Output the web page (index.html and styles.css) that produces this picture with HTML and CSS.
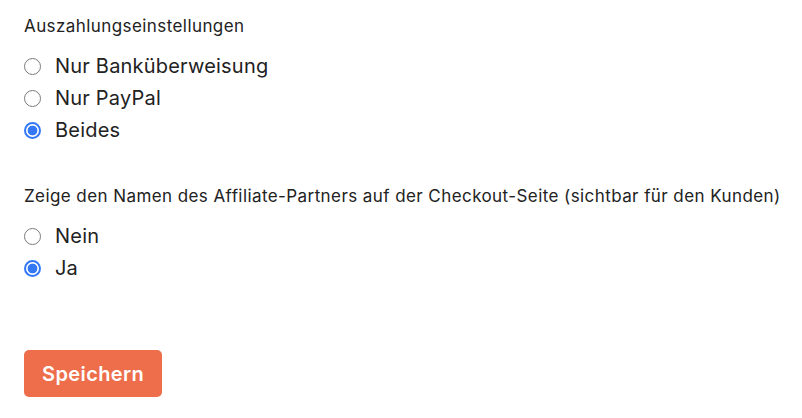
FILE: index.html
```html
<!DOCTYPE html>
<html lang="de">
<head>
<meta charset="utf-8">
<link rel="stylesheet" href="styles.css">
</head>
<body>
<form class="settings">
  <fieldset class="group">
    <div class="label">Auszahlungseinstellungen</div>
    <label class="option"><input type="radio" name="payout"><span>Nur Banküberweisung</span></label>
    <label class="option"><input type="radio" name="payout"><span>Nur PayPal</span></label>
    <label class="option"><input type="radio" name="payout" checked><span>Beides</span></label>
  </fieldset>
  <fieldset class="group second">
    <div class="label">Zeige den Namen des Affiliate-Partners auf der Checkout-Seite (sichtbar für den Kunden)</div>
    <label class="option"><input type="radio" name="show"><span>Nein</span></label>
    <label class="option"><input type="radio" name="show" checked><span>Ja</span></label>
  </fieldset>
  <button type="button" class="save">Speichern</button>
</form>
</body>
</html>
```
FILE: styles.css
```css
html, body {
  margin: 0;
  padding: 0;
  background: #ffffff;
}
body {
  font-family: Inter, "Liberation Sans", sans-serif;
  color: #222222;
}
.settings {
  padding: 14px 24px 0 24px;
  display: flex;
  flex-direction: column;
  align-items: flex-start;
}
.group {
  border: 0;
  margin: 0;
  padding: 0;
  display: flex;
  flex-direction: column;
}
.second {
  margin-top: 38px;
}
.label {
  font-size: 17px;
  letter-spacing: 0.42px;
  line-height: 24px;
  margin-bottom: 12px;
  white-space: nowrap;
}
.option {
  display: flex;
  align-items: center;
  height: 32px;
  font-size: 20px;
  letter-spacing: 0.2px;
}
.option input {
  appearance: none;
  -webkit-appearance: none;
  margin: 0 14px 0 0;
  width: 17px;
  height: 17px;
  border: 1.5px solid #7a7a7a;
  border-radius: 50%;
  box-sizing: border-box;
  background: #fff;
  flex: none;
}
.option input:checked {
  border: 2px solid #3478f6;
  background: radial-gradient(circle, #3478f6 0 4.6px, #fff 5.2px);
}
.save {
  margin-top: 66px;
  background: #ee6d4b;
  color: #ffffff;
  border: 0;
  border-radius: 5px;
  font-family: Inter, "Liberation Sans", sans-serif;
  font-size: 20px;
  letter-spacing: 0.4px;
  font-weight: 600;
  padding: 0 18px;
  height: 47px;
}
```
